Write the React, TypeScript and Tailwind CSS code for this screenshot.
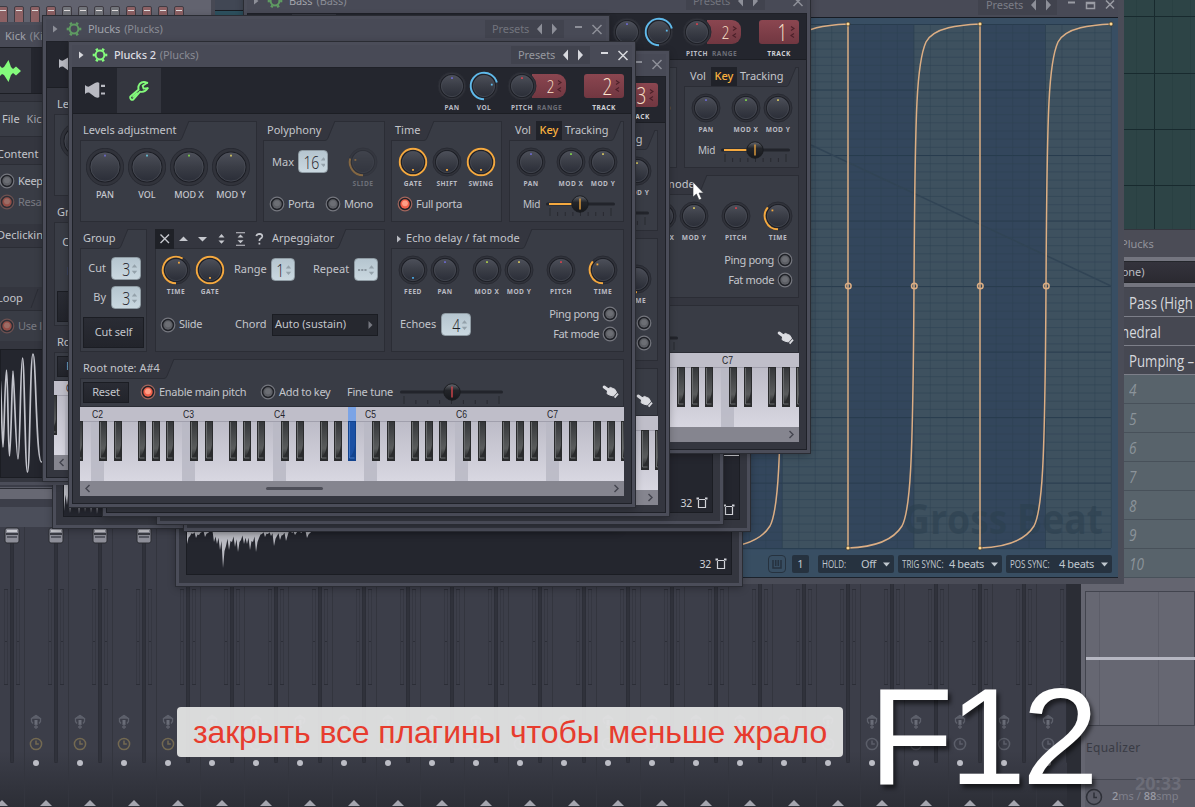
import type { ReactNode } from "react";

const BODY = "font-['Noto_Sans','Open_Sans',sans-serif]";
const COND = "font-['Open_Sans','Noto_Sans',sans-serif]";

function polar(c: number, r: number, deg: number) {
  const a = (deg * Math.PI) / 180;
  return [c + r * Math.sin(a), c - r * Math.cos(a)];
}

type KnobProps = {
  w: number;
  label?: string;
  big?: boolean;
  ring?: string;
  to?: number;
  dot?: string;
  dotAt?: number;
  dim?: boolean;
};

function Knob({ w, label, big, ring, to = 0, dot = "#c9b45a", dotAt = 0, dim }: KnobProps) {
  const s = big ? 38 : 32;
  const c = s / 2;
  const r = big ? 15 : 11.5;
  const rr = big ? 18 : 13.3;
  const [sx, sy] = polar(c, rr, 180);
  const [ex, ey] = polar(c, rr, to);
  const [dx, dy] = polar(c, r - 3.6, dotAt);
  return (
    <div className={`flex shrink-0 flex-col items-center ${dim ? "opacity-40" : ""}`} style={{ width: w }}>
      <svg width={s} height={s} className="block">
        <defs>
          <linearGradient id="knobFace" x1="0" y1="0" x2="0" y2="1">
            <stop offset="0" stopColor="#4c4f59" />
            <stop offset="0.5" stopColor="#3a3d46" />
            <stop offset="1" stopColor="#2b2e38" />
          </linearGradient>
        </defs>
        <circle cx={c} cy={c} r={rr + 0.7} fill="#31333b" stroke="#282a32" />
        <circle cx={c} cy={c} r={r + 0.5} fill="#1c1e25" />
        <circle cx={c} cy={c} r={r - 0.8} fill="url(#knobFace)" stroke="#52555f" strokeWidth="0.6" />
        {ring && to >= 540 && <circle cx={c} cy={c} r={rr} fill="none" stroke={ring} strokeWidth="1.9" />}
        {ring && to < 540 && (
          <path
            d={`M${sx} ${sy}A${rr} ${rr} 0 ${to - 180 > 180 ? 1 : 0} 1 ${ex} ${ey}`}
            fill="none"
            stroke={ring}
            strokeWidth="1.9"
          />
        )}
        <rect x={dx - 0.9} y={dy - 0.9} width="1.8" height="1.8" fill={dot} />
      </svg>
      {label && big && <span className="mt-[2px] whitespace-nowrap text-[9px] leading-[14px] font-medium text-[#c6c8cf]">{label}</span>}
      {label && !big && (
        <span className="whitespace-nowrap text-[6.6px] leading-[11px] font-bold tracking-[0.5px] text-[#b9bbc3]">{label}</span>
      )}
    </div>
  );
}

function Radio({ on, dim }: { on?: boolean; dim?: boolean }) {
  return (
    <svg width="16" height="16" className={`block shrink-0 ${dim ? "opacity-50" : ""}`}>
      <circle cx="8" cy="8" r="6.8" fill="#202228" stroke={on ? "#a0655c" : "#74767e"} strokeWidth="1.2" />
      <circle cx="8" cy="8" r="4.7" fill={on ? "#f0604a" : "#5e6066"} />
      <circle cx="8" cy="7.3" r="2.9" fill={on ? "#ff9d85" : "#6c6e74"} />
    </svg>
  );
}

function Check({ children, on, dim, w }: { children: ReactNode; on?: boolean; dim?: boolean; w?: number }) {
  return (
    <div className={`flex shrink-0 items-center gap-[3px] whitespace-nowrap ${dim ? "text-[#787a82]" : ""}`} style={{ width: w }}>
      <Radio on={on} dim={dim} />
      <span className="tracking-[-0.3px]">{children}</span>
    </div>
  );
}

function Lcd({ children, w = 30 }: { children: ReactNode; w?: number }) {
  return (
    <div
      className="flex h-[23px] shrink-0 items-center justify-end rounded-[4px] border border-[#8f9ba3] bg-linear-to-b from-[#b5c5cf] to-[#cad8e0] pr-[2px]"
      style={{ width: w }}
    >
      <span className={`origin-right scale-x-[0.78] text-[18px] leading-none font-light tracking-[-0.3px] text-[#1d2026] ${COND}`}>{children}</span>
      <svg width="7" height="14" className="ml-[1px] block">
        <path d="M0.8 5.5L3.5 2.2L6.2 5.5ZM0.8 8.7L3.5 12L6.2 8.7Z" fill="#94a1aa" />
      </svg>
    </div>
  );
}

function RedLcd({ children, w, h, round }: { children: ReactNode; w: number; h: number; round?: boolean }) {
  return (
    <div
      className={`flex items-center justify-end bg-linear-to-b from-[#8b4650] to-[#713741] pr-[3px] ${round ? "rounded-r-[9px]" : "rounded-[3px]"}`}
      style={{ width: w, height: h }}
    >
      <span className={`origin-right scale-x-[0.74] leading-none font-light text-[#ffe6cf] ${round ? "text-[18px]" : "text-[23px]"} ${COND}`}>{children}</span>
      <svg width="7" height="14" className="ml-[2px] block">
        <path d="M2 1.5L5 3.5L2 5.5M5 8.5L2 10.5L5 12.5" fill="none" stroke="#4b2029" strokeWidth="1.1" />
      </svg>
    </div>
  );
}

function Slider({ w, at, fill, mark }: { w: number; at: number; fill?: boolean; mark: string }) {
  const ticks = Array.from({ length: 9 }, (_, i) => 4 + (i * (w - 8)) / 8);
  return (
    <svg width={w} height="24" className="block shrink-0">
      <defs>
        <linearGradient id="thumbFace" x1="0" y1="0" x2="0" y2="1">
          <stop offset="0" stopColor="#666970" />
          <stop offset="0.4" stopColor="#23252a" />
          <stop offset="1" stopColor="#16181c" />
        </linearGradient>
      </defs>
      <rect x="0" y="10.5" width={w} height="3" rx="1.5" fill="#22242b" />
      {fill && <rect x="3" y="11" width={at - 3} height="2" fill="#f5a93f" />}
      {ticks.map((t, i) => (
        <path key={t} d={`M${t} ${i % 8 ? 20 : 16}V24`} stroke="#282a31" />
      ))}
      <circle cx={at} cy="12" r="8.2" fill="url(#thumbFace)" stroke="#1a1c20" />
      <path d={`M${at} 6.5V17.5`} stroke={mark} strokeWidth="1.3" />
    </svg>
  );
}

function Section({ w, tab, head, children }: { w: number; tab: number; head: ReactNode; children: ReactNode }) {
  return (
    <div className="flex shrink-0 flex-col bg-[#393c45] shadow-[inset_0_0_0_1px_#2b2d35]" style={{ width: w }}>
      <div className="flex h-[20px] shrink-0">
        <div
          className="flex items-center border-b border-[#2b2d35] bg-[#34363f] pl-[3px] text-[11px] whitespace-nowrap"
          style={{ width: tab }}
        >
          {head}
        </div>
        <svg width="11" height="20" className="block">
          <path d="M0 0H10L3 17Q2 19.5 0 19.5Z" fill="#34363f" />
          <path d="M10 0L3 17Q2 19.5 0 19.5" fill="none" stroke="#2b2d35" />
        </svg>
      </div>
      {children}
    </div>
  );
}

function Gear({ dim }: { dim?: boolean }) {
  return (
    <svg width="16" height="16" viewBox="-8 -8 16 16" className="block shrink-0">
      <g stroke={dim ? "#5f9c62" : "#84fb7c"} fill="none">
        <circle r="4.4" strokeWidth="2" />
        <g strokeWidth="2.6">
          {[0, 60, 120, 180, 240, 300].map((a) => (
            <path key={a} d="M5.1 0H7.3" transform={`rotate(${a})`} />
          ))}
        </g>
      </g>
    </svg>
  );
}

function Hand() {
  return (
    <svg width="18" height="16" className="block">
      <path d="M2.2 3L8 7.2" stroke="#dcdde2" strokeWidth="3" strokeLinecap="round" />
      <path d="M6 5L8.4 3.4L13 5.4L14.6 8.4L11.4 12L7.6 11L5 9.600Z" fill="#dcdde2" stroke="#dcdde2" strokeWidth="1" strokeLinejoin="round" />
      <path d="M16 9.600L12.600 13.600" stroke="#dcdde2" strokeWidth="1.800" />
    </svg>
  );
}

const OCT = 91;
const BLACK = [8, 23, 47, 61, 75];

function Piano() {
  const octs = [-1, 0, 1, 2, 3, 4, 5];
  return (
    <svg width="544" height="74" className="block">
      <defs>
        <linearGradient id="ivory" x1="0" y1="0" x2="0" y2="1">
          <stop offset="0" stopColor="#b6b5c1" />
          <stop offset="1" stopColor="#d8d7e1" />
        </linearGradient>
        <linearGradient id="ebony" x1="0" y1="0" x2="0" y2="1">
          <stop offset="0" stopColor="#35373a" />
          <stop offset="0.75" stopColor="#5a5c5d" />
          <stop offset="1" stopColor="#2a2b2d" />
        </linearGradient>
      </defs>
      <rect width="545" height="74" fill="url(#ivory)" />
      <rect width="545" height="14" fill="#bfbec9" />
      <path d="M0 14.5H545" stroke="#a09fac" />
      {octs.map((o) => {
        const x = 11 + o * OCT;
        return (
          <g key={o}>
            <rect x={x} y="15" width="13" height="59" fill="#b9b8c4" opacity="0.85" />
            {o >= 0 && x < 540 && (
              <text x={x + 1} y="11" fontSize="10" fill="#24252b" fontFamily="Liberation Sans, sans-serif" textLength="11" lengthAdjust="spacingAndGlyphs">
                {`C${o + 2}`}
              </text>
            )}
            {BLACK.map((b) => {
              const hot = o === 2 && b === 75;
              const bx = x + b;
              return (
                <g key={b}>
                  {hot && <rect x={bx} y="0" width="8" height="14" fill="#7ba4e6" />}
                  <rect x={bx} y="14" width="8" height="40" fill={hot ? "#12438e" : "#2a2b2d"} />
                  <path d={`M${bx + 2} 15H${bx + 7}V38Q${bx + 6} 46 ${bx + 2} 50Z`} fill={hot ? "#1a50a4" : "url(#ebony)"} />
                  <path d={`M${bx + 1.5} 15V51H${bx + 6.5}`} fill="none" stroke={hot ? "#5d8fdd" : "#85868a"} strokeWidth="0.7" />
                </g>
              );
            })}
          </g>
        );
      })}
    </svg>
  );
}

function Frame({ x, y, w = 566, h, children }: { x: number; y: number; w?: number; h: number; children?: ReactNode }) {
  return (
    <div
      className="absolute isolate flex flex-col border-[3px] border-[#4b4d59] bg-[#34363f] shadow-[0_0_0_1px_#2a2c33,0_2px_8px_rgba(0,0,0,0.3)]"
      style={{ left: x, top: y, width: w, height: h }}
    >
      {children}
    </div>
  );
}

function TitleBar({ name, kind, active }: { name: string; kind: string; active?: boolean }) {
  const ink = active ? "#d8d9de" : "#8d8f98";
  return (
    <div className="flex h-[22px] shrink-0 items-center bg-[#484a56] pb-[2px] text-[11px]">
      <svg width="20" height="12" className="block">
        <path d="M7 2.5L11.5 6L7 9.5Z" fill={ink} />
      </svg>
      <Gear dim={!active} />
      <span className={`ml-[6px] whitespace-nowrap tracking-[-0.1px] ${active ? "font-medium text-[#dcdde2]" : "text-[#a0a2aa]"}`}>{name}</span>
      <span className="ml-[4px] grow whitespace-nowrap tracking-[-0.1px] text-[#898b94]">{`(${kind})`}</span>
      <div className={`mr-[10px] flex h-[18px] w-[79px] items-center bg-[#41434e] pl-[7px] ${active ? "text-[#96989f]" : "text-[#72747d]"}`}>
        <span className="tracking-[-0.1px]">Presets</span>
        <svg width="28" height="12" className="ml-[5px] block">
          <path d="M8 0.5V11.5L3 6ZM18 0.5V11.5L23 6Z" fill={ink} />
        </svg>
      </div>
      <svg width="32" height="16" className="block">
        <path d="M1 6H8" stroke={ink} strokeWidth="2" />
        <path d="M18.500 4L27.500 13M27.500 4L18.500 13" stroke={ink} strokeWidth="1.5" />
      </svg>
    </div>
  );
}

function PluginWindow({ x, y, name, kind, track, active }: { x: number; y: number; name: string; kind: string; track: string; active?: boolean }) {
  const orange = "#f5a93f";
  return (
    <Frame x={x} y={y} h={465}>
      <TitleBar name={name} kind={kind} active={active} />
      <div className="flex grow flex-col border border-[#1f2128] bg-[#34363f]">
        <div className="flex h-[46px] shrink-0 border-b border-[#1c1e24] bg-[#24262e]">
          <div className="flex w-[44px] items-center justify-center pb-[2px]">
            <svg width="20" height="18" className="block">
              <path d="M0 4Q2 6 4 5.6L10 2Q13 0.6 14.3 2V16Q13 17.4 10 16L4 11.6Q2 11.4 0 13ZM16 3.8H20V6H16ZM16 11.4H20V13.6H16Z" fill="#b9bac2" />
            </svg>
          </div>
          <div className="flex w-[44px] items-center justify-center bg-[#34363f]">
            <svg width="20" height="20" className="block" fill="none" stroke="#84fb7c" strokeWidth="1.9" strokeLinejoin="round" strokeLinecap="round">
              <path d="M18.2 1.8Q13.6 -0.2 10.6 3Q8.8 5.4 9.6 8.6L1.4 15.4Q0.8 17 2 18.4Q3.2 19.2 4.4 18.4L11 10.6Q15.8 11.8 18.6 7.2" />
              <path d="M18.2 1.8L13.6 4.8L14.6 7.6L18.6 7.2M4.2 15.8L8 12.2" />
            </svg>
          </div>
          <div className="flex grow items-start justify-end pt-[2px]">
            <Knob w={32} label="PAN" dot="#6a68c8" />
            <Knob w={32} label="VOL" ring="#5fb9ea" to={435} dot="#5fb9ea" dotAt={80} />
            <div className="ml-[6px] flex w-[64px] items-start">
              <div className="relative z-10">
                <Knob w={32} label="PITCH" dot="#d0424e" />
              </div>
              <div className="-ml-[6px] flex w-[35px] flex-col pt-[4px]">
                <RedLcd w={34} h={24} round>
                  2
                </RedLcd>
                <span className="mt-[4px] ml-[5px] text-[6.6px] leading-[11px] font-bold tracking-[0.5px] text-[#6c6e77]">RANGE</span>
              </div>
            </div>
            <div className="mr-[7px] ml-[14px] flex w-[40px] flex-col items-center pt-[4px]">
              <RedLcd w={40} h={24}>
                {track}
              </RedLcd>
              <span className="mt-[4px] text-[6.6px] leading-[11px] font-bold tracking-[0.5px] text-[#d0d2d8]">TRACK</span>
            </div>
          </div>
        </div>

        <div className="flex flex-col px-[7px] pt-[7px] text-[11px] text-[#c3c5cb]">
          <div className="flex h-[101px]">
            <Section w={177} tab={99} head="Levels adjustment">
              <div className="flex pt-[7px] pl-[4px]">
                <Knob w={42} big label="PAN" dot="#6a68c8" />
                <Knob w={42} big label="VOL" dot="#66c0d8" />
                <Knob w={42} big label="MOD X" dot="#7ed04c" />
                <Knob w={42} big label="MOD Y" dot="#d0c060" />
              </div>
            </Section>
            <div className="ml-[6px] flex">
              <Section w={122} tab={62} head={<span className="ml-px">Polyphony</span>}>
                <div className="flex h-[49px] pt-[5px] pl-[9px]">
                  <span className="mt-[7px] w-[26px] leading-[18px]">Max</span>
                  <div className="mt-[4px] w-[48px]">
                    <Lcd>16</Lcd>
                  </div>
                  <Knob w={34} label="SLIDE" ring={orange} to={285} dot={orange} dotAt={285} dim />
                </div>
                <div className="mt-[2px] flex h-[24px] pl-[6px]">
                  <Check w={56}>Porta</Check>
                  <Check>Mono</Check>
                </div>
              </Section>
            </div>
            <div className="ml-[6px] flex">
              <Section w={111} tab={33} head={<span className="ml-px">Time</span>}>
                <div className="flex h-[49px] pt-[5px] pl-[5px]">
                  <Knob w={34} label="GATE" ring={orange} to={540} dot={orange} dotAt={180} />
                  <Knob w={34} label="SHIFT" dot={orange} dotAt={180} />
                  <Knob w={34} label="SWING" ring={orange} to={540} dot={orange} dotAt={180} />
                </div>
                <div className="mt-[2px] flex h-[24px] pl-[6px]">
                  <Check on>Full porta</Check>
                </div>
              </Section>
            </div>
            <div className="ml-[7px] flex">
              <Section
                w={115}
                tab={102}
                head={
                  <>
                    <span className="ml-[3px] w-[21px]">Vol</span>
                    <span className="mr-[3px] flex h-[19px] w-[26px] items-center justify-center bg-[#202229] font-medium text-[#f9b13f]">Key</span>
                    <span>Tracking</span>
                  </>
                }
              >
                <div className="flex h-[49px] pt-[5px] pl-[5px]">
                  <Knob w={34} label="PAN" dot="#6a68c8" />
                  <div className="ml-[7px] flex">
                    <Knob w={32} label="MOD X" dot="#7ed04c" />
                    <Knob w={32} label="MOD Y" dot="#d0c060" />
                  </div>
                </div>
                <div className="mt-[2px] flex h-[24px] items-center pl-[14px]">
                  <span className="w-[23px] text-[10px] tracking-[-0.2px]">Mid</span>
                  <Slider w={69} at={34} fill mark="#f5a93f" />
                </div>
              </Section>
            </div>
          </div>

          <div className="mt-[7px] flex h-[123px]">
            <Section w={67} tab={38} head="Group">
              <div className="flex flex-col pt-[8px]">
                <div className="flex h-[23px] items-center justify-end gap-[5px] pr-[6px]">
                  <span>Cut</span>
                  <Lcd>3</Lcd>
                </div>
                <div className="mt-[6px] flex h-[23px] items-center justify-end gap-[5px] pr-[6px]">
                  <span>By</span>
                  <Lcd>3</Lcd>
                </div>
                <div className="mx-[3px] mt-[8px] flex h-[31px] items-center justify-center border border-[#1b1d23] bg-linear-to-b from-[#2a2c34] to-[#22242b] tracking-[-0.15px]">Cut self</div>
              </div>
            </Section>
            <div className="ml-[8px] flex">
              <Section
                w={230}
                tab={181}
                head={
                  <>
                    <svg width="114" height="20" className="-ml-[3px] block" fill="none" stroke="#c6c8ce" strokeWidth="1.4">
                      <rect width="19" height="20" fill="#1f2127" stroke="none" />
                      <path d="M5.5 5.5L14 14M14 5.5L5.5 14" />
                      <g fill="#c6c8ce" stroke="none">
                        <path d="M24 12L28.5 7.6L33 12ZM43 8L47.500 12.400L52 8ZM63.500 8.400L66.500 5L69.500 8.400ZM63.500 11.400L66.500 14.800L69.500 11.400ZM82.500 8.600L85.500 5.500L88.500 8.600ZM82.500 11.200L85.500 14.300L88.500 11.200Z" />
                      </g>
                      <path d="M81 3.700H90M81 16.200H90" strokeWidth="1.1" />
                      <path d="M101.300 7.200Q101.800 4.800 104.500 4.800Q107.400 5 107.300 7.400Q107.100 8.800 105.300 9.700Q104.400 10.300 104.400 12M104.400 13.700V15.400" strokeWidth="1.7" />
                    </svg>
                    <span className="ml-[3px]">Arpeggiator</span>
                  </>
                }
              >
                <div className="flex h-[56px] pt-[5px] pl-[4px]">
                  <Knob w={34} label="TIME" ring={orange} to={390} dot={orange} dotAt={22} />
                  <Knob w={34} label="GATE" ring={orange} to={540} dot={orange} dotAt={180} />
                  <div className="mt-[4px] flex h-[23px] grow items-center pl-[7px]">
                    <span className="w-[37px]">Range</span>
                    <Lcd w={24}>1</Lcd>
                    <span className="ml-[18px] w-[41px]">Repeat</span>
                    <Lcd w={24}>
                      <svg width="12" height="4" className="block">
                        <path d="M0.500 2H3.200M4.600 2H7.300M8.700 2H11.400" stroke="#555d66" strokeWidth="1.200" />
                      </svg>
                    </Lcd>
                  </div>
                </div>
                <div className="mt-[8px] flex h-[23px] items-center pl-[5px]">
                  <Check w={75}>Slide</Check>
                  <span className="w-[37px]">Chord</span>
                  <div className="flex h-[22px] w-[106px] items-center justify-between border border-[#1b1d23] bg-[#26282f] pr-[4px] pl-[2px] whitespace-nowrap">
                    <span>Auto (sustain)</span>
                    <svg width="5" height="8" className="block">
                      <path d="M0.500 0L4.500 4L0.500 8Z" fill="#777981" />
                    </svg>
                  </div>
                </div>
              </Section>
            </div>
            <div className="ml-[6px] flex">
              <Section
                w={233}
                tab={131}
                head={
                  <>
                    <svg width="12" height="10" className="block">
                      <path d="M3 1.500L7 5L3 8.500Z" fill="#b9bbc2" />
                    </svg>
                    <span className="tracking-[0.1px]">Echo delay / fat mode</span>
                  </>
                }
              >
                <div className="flex h-[56px] pt-[5px] pl-[6px]">
                  <Knob w={32} label="FEED" dot="#4aa6e0" dotAt={180} />
                  <Knob w={32} label="PAN" dot="#6a68c8" />
                  <div className="mx-[10px] flex">
                    <Knob w={32} label="MOD X" dot="#a8c84c" />
                    <Knob w={32} label="MOD Y" dot="#d0c060" />
                  </div>
                  <Knob w={32} label="PITCH" dot="#d0424e" />
                  <div className="ml-[10px]">
                    <Knob w={32} label="TIME" ring={orange} to={310} dot={orange} dotAt={315} />
                  </div>
                </div>
                <div className="flex justify-between pr-[6px] pl-[9px]">
                  <div className="mt-[8px] flex h-[23px] items-center">
                    <span className="w-[41px]">Echoes</span>
                    <Lcd>4</Lcd>
                  </div>
                  <div className="-mt-px flex flex-col items-end tracking-[-0.35px]">
                    <div className="flex h-[20px] items-center gap-[3px]">
                      <span>Ping pong</span>
                      <Radio />
                    </div>
                    <div className="flex h-[20px] items-center gap-[3px]">
                      <span>Fat mode</span>
                      <Radio />
                    </div>
                  </div>
                </div>
              </Section>
            </div>
          </div>

          <div className="mt-[7px] flex h-[48px]">
            <Section w={544} tab={84} head="Root note: A#4">
              <div className="-mt-px flex h-[28px] items-center pl-[3px]">
                <div className="flex h-[21px] w-[46px] items-center justify-center border border-[#1b1d23] bg-linear-to-b from-[#2a2c34] to-[#22242b] tracking-[-0.15px]">Reset</div>
                <div className="ml-[11px] flex">
                  <Check on w={120}>
                    Enable main pitch
                  </Check>
                  <Check w={87}>Add to key</Check>
                </div>
                <span className="w-[53px] tracking-[-0.25px]">Fine tune</span>
                <Slider w={103} at={52} mark="#e0484e" />
                <div className="ml-[99px]">
                  <Hand />
                </div>
              </div>
            </Section>
          </div>
          <Piano />
          <div className="flex h-[15px] items-center justify-between bg-[#85858f] px-[4px]">
            <svg width="7" height="9" className="block">
              <path d="M5.500 1L2 4.500L5.500 8" fill="none" stroke="#44454f" strokeWidth="1.400" />
            </svg>
            <div className="mr-[115px] h-[3px] w-[57px] rounded bg-[#4d4e58]" />
            <svg width="7" height="9" className="block">
              <path d="M1.500 1L5 4.500L1.500 8" fill="none" stroke="#44454f" strokeWidth="1.400" />
            </svg>
          </div>
        </div>
      </div>
    </Frame>
  );
}

function LoopLength({ text = "32" }: { text?: string }) {
  return (
    <div className="flex items-center gap-[4px] text-[10.5px] leading-[14px] tracking-[-0.3px] text-[#d2d3d9]">
      {text && <span>{text}</span>}
      <svg width="12" height="12" className="block" fill="none" stroke="#d2d3d9">
        <path d="M2.500 3V10.500H9.500V3M3 2.500H9" strokeWidth="1.200" />
        <path d="M0.500 1.500H3M9 1.500H11.500" strokeWidth="2" />
      </svg>
    </div>
  );
}

function Burst({ seed, w, h, step = 3 }: { seed: number[]; w: number; h: number; step?: number }) {
  return (
    <svg width={w} height={h} className="block shrink-0">
      <path
        d={"M0 0" + seed.map((v, i) => `L${i * step} ${v}L${(i + 0.5) * step} ${v * 0.55}`).join("") + `L${seed.length * step} 0Z`}
        fill="#b9bac2"
      />
    </svg>
  );
}

function SamplerTail({ x, bottom, children }: { x: number; bottom: number; children?: ReactNode }) {
  return (
    <Frame x={x} y={bottom - 465} h={465}>
      <div className="mx-[7px] mt-[300px] mb-[8px] flex grow flex-col border border-[#1b1d23] bg-[#24262e]">{children}</div>
    </Frame>
  );
}

const burst = [14, 6, 4, 8, 5, 2, 7, 3, 2, 12, 14, 20, 38, 16, 20, 12, 17, 22, 10, 14, 14, 20, 12, 22, 8, 4, 7, 4, 6, 16, 6, 10, 5, 11, 1, 3, 5, 1, 3, 2, 8, 3, 2];

function KickWindow() {
  return (
    <div className="absolute top-[22px] -left-[37px] flex h-[463px] w-[400px] flex-col border-[3px] border-[#4b4d59] bg-[#34363f] text-[11px] text-[#c3c5cb]">
      <div className="flex h-[22px] shrink-0 items-center bg-[#484a56] pl-[39px]">
        <span className="text-[#a0a2aa]">Kick</span>
        <span className="ml-[4px] text-[#898b94]">(Kick)</span>
      </div>
      <div className="flex h-[47px] shrink-0 border-y border-[#1c1e24] bg-[#24262e]">
        <div className="flex w-[65px] items-center justify-end bg-[#34363f] pr-[9px]">
          <svg width="32" height="24" className="block">
            <path d="M0 12L4 8L7 12L10 7L12 9L14 8L18.500 1L21 8L23 10L26 7.500L31 12L26 16.500L23 14L21 16L18.500 23L14 16L12 15L10 17L7 12L4 16Z" fill="#84fb7c" />
          </svg>
        </div>
      </div>
      <div className="ml-[34px] flex flex-col">
        <div className="mt-[7px] flex h-[36px] items-center gap-[7px] border-y border-[#2b2d35] bg-[#393c45] pl-[2px]">
          <span>File</span>
          <span className="text-[#a2a4ac]">Kick</span>
        </div>
        <div className="mt-[8px] flex h-[20px] items-center border-b border-[#2b2d35]">
          <span className="-ml-[3px]">Content</span>
        </div>
        <div className="flex h-[59px] flex-col gap-[4px] bg-[#393c45] pt-[8px]">
          <div className="-ml-[1px]">
            <Check>Keep on disk</Check>
          </div>
          <div className="-ml-[1px]">
            <Check on dim>
              Resample
            </Check>
          </div>
        </div>
        <div className="flex h-[24px] items-center border-b border-[#2b2d35]">
          <span className="-ml-[3px]">Declicking mode</span>
        </div>
        <div className="h-[39px] bg-[#393c45]" />
        <div className="flex h-[24px] items-center border-b border-[#2b2d35]">
          <span className="-ml-[3px] w-[31px]">Loop</span>
          <svg width="11" height="20" className="block">
            <path d="M10 0L3 19" stroke="#2b2d35" />
          </svg>
        </div>
        <div className="-ml-px flex h-[30px] items-center bg-[#393c45]">
          <Check on dim>
            Use loop points
          </Check>
        </div>
        <div className="mt-[8px] h-[129px] border border-[#1b1d23] bg-[#24262e]">
          <svg width="46" height="127" className="block">
            <path
              d="M-1 25C0 25 1 97 2 97S4 20 5.500 20S7 106 8.500 106S11 21 12 21S15 109 17 109S19.500 8 21.500 8S24 122 26.500 122S29 4 32 4S35 112 40.500 112S42 80 45 50"
              fill="none"
              stroke="#c3c4cc"
              strokeWidth="1.700"
            />
          </svg>
        </div>
      </div>
    </div>
  );
}

function Strip({ i }: { i: number }) {
  const warm = i <= 4;
  return (
    <div className="flex h-full w-[44px] shrink-0 flex-col border-l border-[#33353e]">
      <div className="flex h-[236px] shrink-0">
        <div className="flex w-[23px] flex-col items-center pt-[187px] pr-[2px]">
          <svg width="12" height="16" className="block shrink-0" fill="none" stroke="#5d606b" strokeWidth="1.300">
            <path d="M3 9.500L1.500 7.500V4.500L6 1.500L10.500 4.500V7.500L9 9.500" />
            <path d="M2.500 4L6 1.500L9.500 4Z" fill="#5d606b" />
            <rect x="4.500" y="6" width="3" height="5" fill="#6a6d78" stroke="none" />
            <path d="M6 10V15M4 13H8" />
          </svg>
          <svg width="14" height="14" className="mt-[7px] block shrink-0" fill="none" stroke={warm ? "#736951" : "#5b5e69"} strokeWidth="1.500">
            <circle cx="7" cy="7" r="5.600" />
            <path d="M7 3.500V7H9.800" />
          </svg>
          <svg width="8" height="8" className="mt-[8px] block shrink-0">
            <circle cx="4" cy="4" r="3" fill="#bcbdc5" />
          </svg>
        </div>
        <svg width="20" height="236" className="block">
          <g stroke="#2c2e37" fill="none">
            <path d="M0 62.500H4M12 62.500H16M0 114.500H4M12 114.500H16M0 157.500H4M12 157.500H16" />
            <path d="M0.500 63V157M3.500 63V157M12.500 63V157M15.500 63V157" stroke="#353741" />
            <rect x="6.500" y="2" width="3" height="234" rx="1.500" fill="#30323b" />
          </g>
          {i < 4 && (
            <g>
              <rect x="1" y="1" width="14" height="15" rx="2" fill="#8d8e98" stroke="#2a2c33" />
              <rect x="3" y="3" width="10" height="2" fill="#c9cad0" />
              <rect x="2" y="6" width="12" height="2" fill="#3c3e46" />
              <rect x="3" y="9" width="10" height="2" fill="#565862" />
            </g>
          )}
        </svg>
      </div>
      <svg width="44" height="44" className="block shrink-0">
        <path d="M21 37L27 43H15Z" fill="#a5a6af" />
      </svg>
    </div>
  );
}

const steps = [1, 1, 1, 1, 0, 0, 0, 0, 1, 1, 1, 1];

function Backdrop() {
  return (
    <div className="absolute inset-0 flex flex-col bg-[#3b3d48]">
      <div className="flex h-[16px] shrink-0">
        <div className="flex h-[23px] w-[211px] bg-[#62636f] pt-[6px]">
          <div className="-ml-[2px] flex gap-[6px]">
            {steps.map((s, i) => (
              <div key={i} className={`flex h-[18px] w-[10px] shrink-0 justify-center rounded-t-[2px] border border-[#3f3c44] pt-[3px] ${s ? "bg-[#8d6164]" : "bg-[#73757b]"}`}>
                <div className="h-px w-[6px] bg-[#e0dcdd]" />
              </div>
            ))}
          </div>
        </div>
        <div className="h-[16px] w-[4px] bg-[#474954]" />
        <div className="h-[16px] w-[29px] bg-[#414754] pt-[10px]">
          <div className="h-[6px] border-t border-[#181c22] bg-[#2d515f]" />
        </div>
      </div>
      <div className="flex h-[511px] shrink-0 flex-col justify-end">
        <div className="h-px bg-[#585a65]" />
        <div className="h-[11px] border-t border-[#2b2d35] bg-[#676873]" />
        <div className="h-[8px] bg-[#3c3e49]" />
        <div className="h-[20px] bg-[#4b4e5a]" />
      </div>
      <div className="flex grow overflow-hidden bg-linear-to-b from-[#3c3e49] from-80% to-[#2c2e36]">
        <div className="-ml-[20px] flex">
          {Array.from({ length: 25 }, (_, i) => (
            <Strip key={i} i={i} />
          ))}
        </div>
      </div>
    </div>
  );
}

function RightPanel() {
  const slots = [
    ["Pass (High", 4],
    ["hedral", -4],
    ["Pumping –", 4],
  ] as const;
  return (
    <div className="absolute top-0 left-[1067px] flex h-[807px] w-[128px] flex-col bg-[#2b2d35] pl-[14px]">
      <svg width="114" height="229" className="block shrink-0">
        <rect width="114" height="229" fill="#2d4446" />
        <path d="M55.500 0V229M91.500 0V229M109.500 0V229" stroke="#294042" />
        <path d="M0 16.500H114M0 73.500H114M0 129.500H114M0 185.500H114M73.500 0V229" stroke="#182a2e" />
      </svg>
      <div className="flex h-[28px] shrink-0 items-center border-t border-[#33353d] bg-[#4b4c56] pt-px pl-[40px] text-[11px] text-[#92949c]">Plucks</div>
      <div className="h-[4px] shrink-0 bg-[#74757f]" />
      <div className="flex h-[22px] shrink-0 items-center border-y border-[#24262b] bg-linear-to-b from-[#34333c] to-[#2b2a31] pl-[29px] text-[11px] text-[#b9bbc2]">(None)</div>
      <div className="h-[5px] shrink-0 border-b border-[#41434d] bg-[#74757f]" />
      {slots.map(([t, dx]) => (
        <div key={t} className="flex h-[29px] shrink-0 items-center overflow-hidden border-b border-[#7d7f89] bg-[#464852] whitespace-nowrap text-[#d5d7dc]">
          <span className={`origin-left scale-x-[0.78] text-[17px] leading-none ${COND}`} style={{ marginLeft: 44 + dx }}>
            {t}
          </span>
        </div>
      ))}
      {[4, 5, 6, 7, 8, 9, 10].map((n) => (
        <div key={n} className="flex h-[29px] shrink-0 items-center border-b border-[#48515a] bg-[#58636b] pl-[48px] text-[#8b939a]">
          <span className={`origin-left scale-x-[0.8] text-[17px] leading-none italic ${COND}`}>{n}</span>
        </div>
      ))}
      <div className="flex grow flex-col bg-[#646570] pt-[13px] pl-[4px]">
        <div className="flex h-[135px] shrink-0 flex-col border border-[#42444e] bg-[#666772]">
          <svg width="110" height="133" className="block">
            <path d="M13.500 0V133M72.500 0V133" stroke="#5c5d68" />
            <rect y="65" width="110" height="3" fill="#b6b7c2" />
          </svg>
        </div>
        <div className="flex h-[54px] shrink-0 items-center border-b border-[#464852] bg-[#5e5f6a] pt-px text-[12px] text-[#393b44]">
          <span className="ml-px pb-[10px] tracking-[0.3px]">Equalizer</span>
        </div>
        <div className="relative flex grow items-center bg-[#5a5b66] pt-[6px]">
          <svg width="18" height="18" className="block shrink-0" fill="none" stroke="#2e3038" strokeWidth="1.500">
            <circle cx="9" cy="9" r="7.500" />
            <path d="M9 4.500V9.500H12" />
          </svg>
          <span className="ml-[9px] text-[11px] whitespace-nowrap text-[#7f808b]">
            <b className="font-medium text-[#9a9ba5]">2</b>ms / <b className="font-medium text-[#9a9ba5]">88</b>smp
          </span>
          <span className="absolute -top-[10px] left-[50px] text-[18px] font-bold text-[#6c6d78]">20:33</span>
        </div>
      </div>
    </div>
  );
}

function Combo({ label, value, w }: { label: string; value: string; w: number }) {
  return (
    <div className="flex h-[18px] items-center justify-between rounded-[2px] bg-[#26323f] pr-[4px] pl-[4px] whitespace-nowrap text-[#c0c8cf]" style={{ width: w }}>
      <span className="flex w-[10px] grow items-center justify-between pr-[7px]">
        <span className={`-mr-[12px] origin-left scale-x-[0.8] text-[10px] ${COND}`}>{label}</span>
        <span className="text-[11px] tracking-[-0.35px]">{value}</span>
      </span>
      <svg width="7" height="5" className="block">
        <path d="M0 0.500H7L3.500 4.500Z" fill="#c0c8cf" />
      </svg>
    </div>
  );
}

function GrossBeat() {
  const seg = (x: number) =>
    `M${x} 531C${x + 30} 530 ${x + 46} 522 ${x + 54} 509C${x + 62} 494 ${x + 65} 453 ${x + 66} 269C${x + 67} 83 ${x + 69} 45 ${x + 78} 25C${x + 86} 10 ${x + 112} 8 ${x + 132} 7`;
  const rows = Array.from({ length: 65 }, (_, i) => i);
  return (
    <div className="absolute top-[-10px] left-[640px] flex h-[594px] w-[484px] flex-col border-[6px] border-[#4a4c57] bg-[#384e62]">
      <div className="-mt-[6px] flex h-[27px] shrink-0 items-end justify-end bg-[#484a56] pb-[2px] text-[11px] text-[#7b7d86]">
        <div className="flex h-[20px] w-[79px] items-center bg-[#41434e] pl-[8px]">
          <span className="tracking-[-0.1px]">Presets</span>
          <svg width="28" height="12" className="ml-[5px] block">
            <path d="M8 0.500V11.500L3 6ZM18 0.500V11.500L23 6Z" fill="#8d8f98" />
          </svg>
        </div>
        <svg width="61" height="20" className="block" fill="none" stroke="#9a9ca4" strokeWidth="1.500">
          <path d="M11 7.500H18" strokeWidth="2" />
          <path d="M29.500 7.500H37.500V13.500H29.500ZM29.500 8.500H37.500" />
          <path d="M49 5.500L57 13.500M57 5.500L49 13.500" />
        </svg>
      </div>
      <div className="h-[538px] shrink-0 border-t border-[#171c24]">
        <svg width="472" height="537" viewBox="646 1 472 537" className="block">
          <rect x="646" y="0" width="473" height="538" fill="#384e63" />
          {[716, 848, 980].map((x) => (
            <g key={x}>
              <rect x={x} y="7" width="66" height="524" fill="#33465c" />
              <rect x={x + 66} y="7" width="66" height="524" fill="#3e515f" />
            </g>
          ))}
          {rows.map((i) => (
            <path key={i} d={`M646 ${7.500 + i * 8.190}H1111`} stroke={i % 8 === 0 ? "#283c4e" : "#2f4353"} strokeOpacity={i % 8 === 0 ? 1 : 0.55} />
          ))}
          {Array.from({ length: 25 }, (_, i) => (
            <path key={i} d={`M${716.500 + i * 16.450} 7V531`} stroke="#2d4151" strokeOpacity={i % 4 === 0 ? 0.8 : 0.4} />
          ))}
          <path d="M811 128L1111 269" stroke="#314455" strokeWidth="1.500" />
          <text x="903" y="517" fontSize="41" fontWeight="bold" fontFamily="Open Sans, sans-serif" fill="#2c404f" fillOpacity="0.6" textLength="200" lengthAdjust="spacingAndGlyphs">
            Gross Beat
          </text>
          <g fill="none" stroke="#dcae84" strokeWidth="1.500">
            <path d={`${seg(716)}V531${seg(848)}V531${seg(980)}`} />
            {[848, 914, 980, 1046].map((x) => (
              <circle key={x} cx={x + 0.300} cy="269" r="2.800" />
            ))}
          </g>
          <g fill="#ffd991" stroke="#3a2f22" strokeWidth="0.700">
            {[[848, 7], [980, 7], [1111, 7], [848, 531], [980, 531]].map(([x, y]) => (
              <circle key={`${x}-${y}`} cx={x} cy={y} r="2" />
            ))}
          </g>
        </svg>
      </div>
      <div className="flex h-[23px] shrink-0 items-center justify-end gap-[4px] border-b border-[#1c222b] pr-[6px] pb-[4px]">
        <div className="flex h-[18px] w-[18px] items-center justify-center rounded-[4px] border border-[#26323f]">
          <svg width="10" height="9" className="block" fill="none" stroke="#26323f" strokeWidth="1.500">
            <path d="M1 0V8H9V0M3.700 0V6M6.300 0V6" />
          </svg>
        </div>
        <div className="mr-[5px] ml-[2px] flex h-[18px] w-[17px] items-center justify-center rounded-[2px] bg-[#26323f] text-[11px] text-[#c0c8cf]">1</div>
        <Combo label="HOLD:" value="Off" w={76} />
        <Combo label="TRIG SYNC:" value="4 beats" w={104} />
        <Combo label="POS SYNC:" value="4 beats" w={106} />
      </div>
    </div>
  );
}

export default function App() {
  return (
    <div className={`relative h-[807px] w-[1195px] overflow-hidden bg-[#3b3d48] ${BODY}`}>
      <Backdrop />
      <RightPanel />
      <GrossBeat />
      <SamplerTail x={176} bottom={586}>
        <div className="mt-[105px] flex flex-col">
          <Burst seed={burst} w={140} h={42} />
          <div className="-mt-[15px] self-end pr-[4px]">
            <LoopLength />
          </div>
        </div>
      </SamplerTail>
      <SamplerTail x={53} bottom={528}>
        <div className="flex grow items-end pb-px">
          <Burst seed={[36, 30, 38, 24, 34, 39, 22, 37, 30, 38, 26, 39, 33, 38]} w={42} h={40} />
        </div>
      </SamplerTail>
      <SamplerTail x={184} bottom={531}>
        <div className="mt-[85px] h-px bg-[#c9cad0]" />
        <div className="flex grow items-end justify-end pr-[4px] pb-[3px]">
          <LoopLength text="" />
        </div>
      </SamplerTail>
      <SamplerTail x={157} bottom={524}>
        <div className="flex grow items-end justify-end pr-[4px] pb-[2px]">
          <LoopLength />
        </div>
      </SamplerTail>
      <KickWindow />
      <PluginWindow x={244} y={-12} name="Bass" kind="Bass" track="1" />
      <PluginWindow x={43} y={16} name="Plucks" kind="Plucks" track="1" />
      <PluginWindow x={103} y={51} name="Plucks 3" kind="Plucks" track="3" />
      <PluginWindow x={69} y={42} name="Plucks 2" kind="Plucks" track="2" active />

      <svg width="14" height="22" className="absolute top-[181px] left-[692px] block">
        <path d="M1 1V16L4.400 13L7 19L9.600 17.800L7 12H11.500Z" fill="#fff" stroke="#33353c" strokeWidth="0.600" />
      </svg>

      <div className="absolute top-[707px] left-[177px] flex h-[50px] w-[666px] items-center justify-center rounded-[4px] bg-[#e8e8e8]/92 font-['Liberation_Sans',sans-serif] text-[32px] leading-none tracking-[-0.13px] whitespace-nowrap text-[#e73c2e]">
        закрыть все плагины чтобы меньше жрало
      </div>
      <div className="absolute top-[667px] left-[869px] font-['Liberation_Sans',sans-serif] text-[138px] leading-[138px] tracking-[-4px] whitespace-nowrap text-white [text-shadow:3px_4px_4px_rgba(0,0,0,0.55)]">
        F12
      </div>
    </div>
  );
}
